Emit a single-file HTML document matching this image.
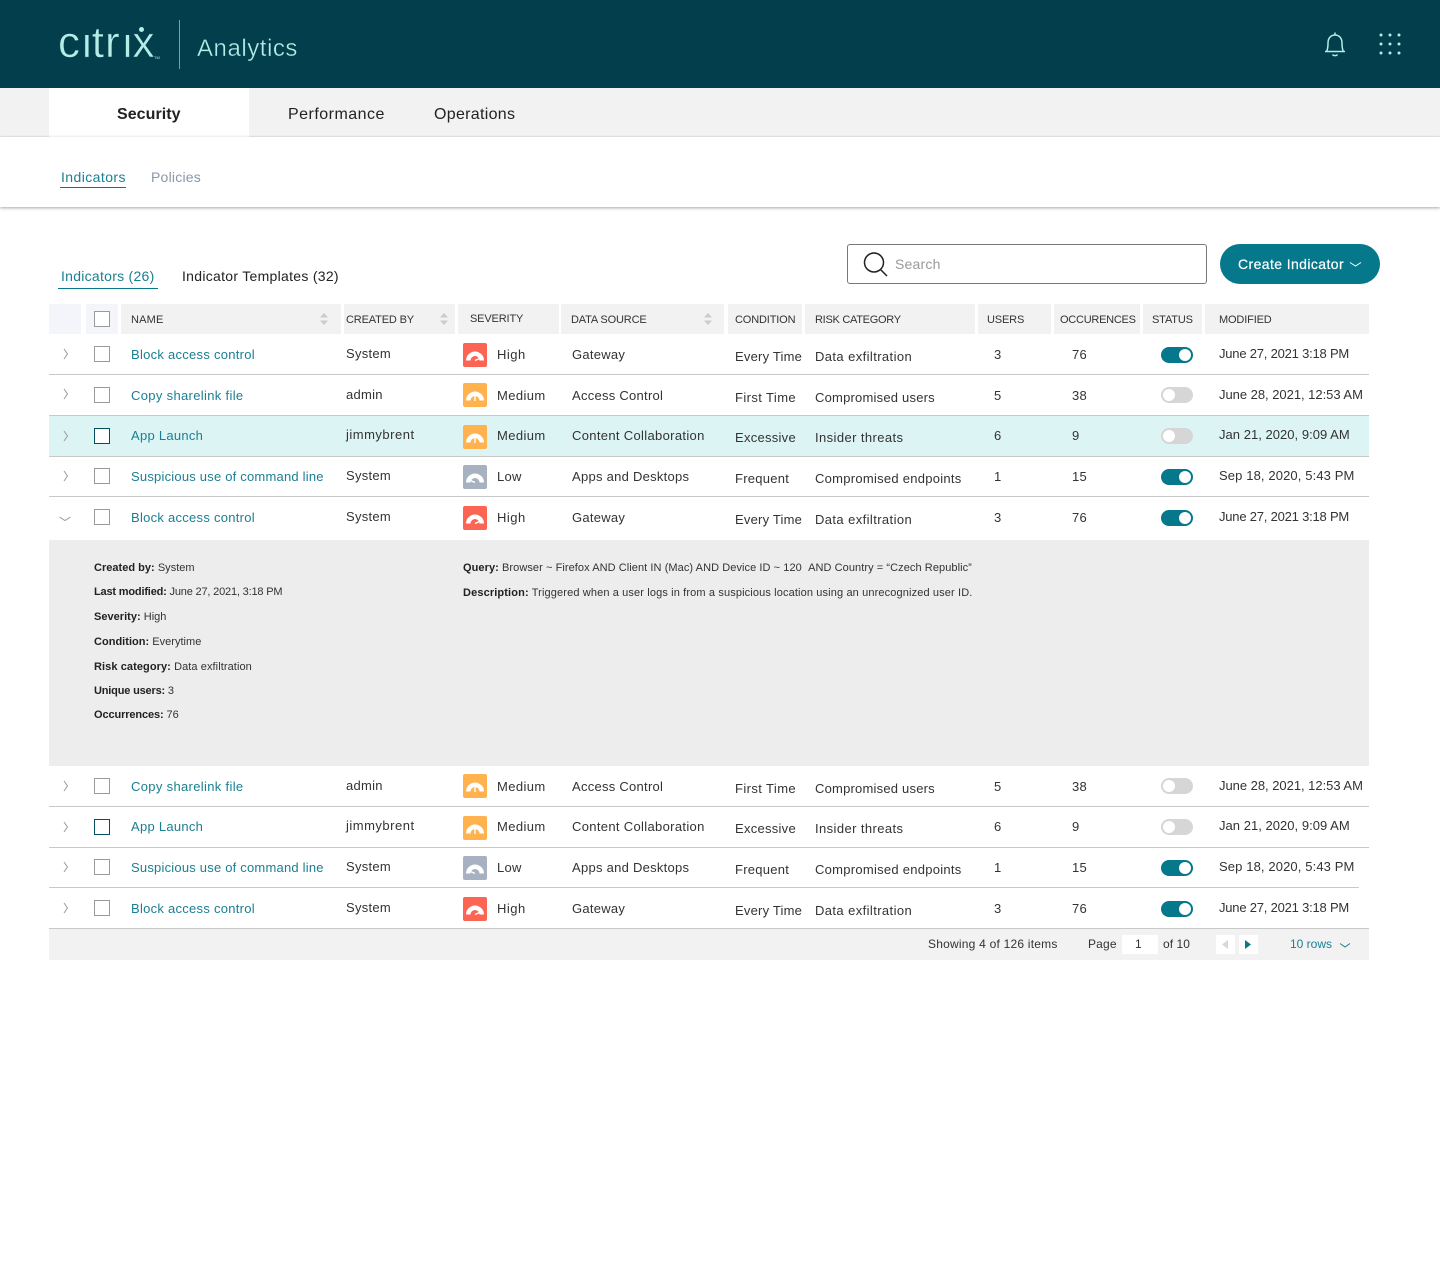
<!DOCTYPE html>
<html lang="en"><head><meta charset="utf-8"><title>Citrix Analytics - Indicators</title>
<style>
*{box-sizing:border-box}
html,body{margin:0;padding:0;background:#fff}
body{position:relative;width:1440px;height:1281px;overflow:hidden;font-family:"Liberation Sans",sans-serif;color:#333;font-size:13px;letter-spacing:.27px}
.a{position:absolute;white-space:nowrap}
.h{position:absolute;top:304px;height:30px;background:#f2f2f2;font-size:11px;line-height:30px;color:#333;letter-spacing:-.15px;white-space:nowrap}
.h span{position:absolute;top:1px}
.r{position:absolute;left:0;width:1440px;height:40px}
.r>span{position:absolute;top:1px;line-height:40px;white-space:nowrap}
.nm{left:131px;color:#1a7f92}
.cb{left:346px;margin-top:-1px}
.sv{left:497px}
.ds{left:572px}
.cn{left:735px;margin-top:2px}
.rk{left:815px;margin-top:2px}
.us{left:994px}
.oc{left:1072px}
.md{left:1219px;margin-top:-1px}
.ls2{letter-spacing:.21px}
.ls3{letter-spacing:.33px}
.ls4{letter-spacing:.4px}
.ls5{letter-spacing:.5px}
.d27{letter-spacing:-.21px}
.d28{letter-spacing:-.03px}
.d21{letter-spacing:.03px}
.d18{letter-spacing:.12px}
.chk{position:absolute;left:94px;top:12px;width:16px;height:16px;border:1px solid #9a9a9a;background:#fff}
.chk.on{border-color:#04505f}
.ic{position:absolute;left:463px;top:9px;width:24px;height:24px;display:block}
.ch{position:absolute;left:60px;top:14px;width:12px;height:12px;display:block}
.tg{position:absolute;left:1161px;top:13px;width:32px;height:16px;border-radius:8px;background:#05788c}
.tg i{position:absolute;left:18px;top:2px;width:12px;height:12px;border-radius:50%;background:#fff}
.tg.off{background:#d6d6d6}
.tg.off i{left:2px}
.ln{position:absolute;left:49px;width:1320px;height:1px;background:#c8c8c8}
.dt{position:absolute;font-size:11px;line-height:14px;color:#333;letter-spacing:.02px;white-space:nowrap}
.dt b{color:#222}
</style></head><body>
<svg width="0" height="0" style="position:absolute"><defs>
<symbol id="hi" viewBox="0 0 24 24"><rect width="24" height="24" rx="2" fill="#fc6453"/><path d="M3 17.500A9 9 0 0 1 21 17.500H16.500A4.500 4.500 0 0 0 7.500 17.500Z" fill="#fff"/><path d="M12 17.500L16.500 15.500" stroke="#fff" stroke-width="1.500"/></symbol>
<symbol id="me" viewBox="0 0 24 24"><rect width="24" height="24" rx="2" fill="#ffb24d"/><path d="M3 17.500A9 9 0 0 1 21 17.500H16.500A4.500 4.500 0 0 0 7.500 17.500Z" fill="#fff"/><path d="M12 13V18" stroke="#fff" stroke-width="1.500"/></symbol>
<symbol id="lo" viewBox="0 0 24 24"><rect width="24" height="24" rx="2" fill="#a8b1c1"/><path d="M3 17.500A9 9 0 0 1 21 17.500H16.500A4.500 4.500 0 0 0 7.500 17.500Z" fill="#fff"/><path d="M12 17.500L7.500 15.500" stroke="#fff" stroke-width="1.500"/></symbol>
<symbol id="cr" viewBox="0 0 12 12"><path d="M4 1L7.500 6L4 11" fill="none" stroke="#999" stroke-width="1"/></symbol>
<symbol id="cd" viewBox="0 0 12 12"><path d="M.5 4L6 7.500L11.500 4" fill="none" stroke="#999" stroke-width="1"/></symbol>
<symbol id="so" viewBox="0 0 8 14"><path d="M4 1L8 5.500H0ZM4 13L0 8.500H8Z" fill="#ccc"/></symbol>
</defs></svg>

<!-- top bar -->
<div class="a" style="left:0;top:0;width:1440px;height:88px;background:#023e4c"></div>
<div class="a" style="left:58px;top:15px;font-size:44px;line-height:56px;color:#b5ece8;letter-spacing:0;-webkit-text-stroke:.5px #023e4c"><span style="letter-spacing:2px">c</span>i<span style="letter-spacing:1px">t</span><span style="letter-spacing:3px">r</span>ix</div>
<div class="a" style="left:83px;top:20px;width:8px;height:15px;background:#023e4c"></div>
<div class="a" style="left:123px;top:20px;width:8px;height:15px;background:#023e4c"></div>
<div class="a" style="left:139px;top:27px;width:5px;height:5px;border-radius:50%;background:#b5ece8"></div>
<div class="a" style="left:154px;top:55px;font-size:4px;line-height:5px;color:#b5ece8;letter-spacing:0">TM</div>
<div class="a" style="left:179px;top:20px;width:1px;height:49px;background:#7d9ea6"></div>
<div class="a" style="left:197px;top:34px;font-size:24px;line-height:30px;color:#b5ece8;letter-spacing:.55px;-webkit-text-stroke:.35px #023e4c">Analytics</div>
<svg class="a" style="left:1322px;top:30px" width="26" height="28" viewBox="0 0 26 28" fill="none" stroke="#b5ece8" stroke-width="1.500"><path d="M13 2.500V5M4.500 21.500C5.800 19.500 6 17.500 6 13C6 8 9 5 13 5S20 8 20 13C20 17.500 20.200 19.500 21.500 21.500ZM3 21.500H23M10.500 24.500C11.500 26 14.500 26 15.500 24.500"/></svg>
<svg class="a" style="left:1376px;top:30px" width="28" height="28" fill="#b5ece8"><circle cx="5" cy="5" r="1.500"/><circle cx="14" cy="5" r="1.500"/><circle cx="23" cy="5" r="1.500"/><circle cx="5" cy="14" r="1.500"/><circle cx="14" cy="14" r="1.500"/><circle cx="23" cy="14" r="1.500"/><circle cx="5" cy="23" r="1.500"/><circle cx="14" cy="23" r="1.500"/><circle cx="23" cy="23" r="1.500"/></svg>

<!-- main tabs -->
<div class="a" style="left:0;top:88px;width:1440px;height:49px;background:#f2f2f2;border-bottom:1px solid #ececec"></div>
<div class="a" style="left:49px;top:88px;width:200px;height:49px;background:#fff"></div>
<div class="a" style="left:117px;top:105px;font-size:16px;line-height:20px;font-weight:bold;color:#222;letter-spacing:.05px">Security</div>
<div class="a" style="left:288px;top:105px;font-size:16px;line-height:20px;color:#222;letter-spacing:.48px">Performance</div>
<div class="a" style="left:434px;top:105px;font-size:16px;line-height:20px;color:#222;letter-spacing:.3px">Operations</div>

<!-- sub nav -->
<div class="a" style="left:0;top:137px;width:1440px;height:70px;background:#fff;box-shadow:0 1px 3px rgba(0,0,0,.35)"></div>
<div class="a" style="left:61px;top:169px;font-size:14px;line-height:17px;color:#1a7f92;letter-spacing:.42px">Indicators</div>
<div class="a" style="left:60px;top:187px;width:66px;height:1px;background:#05788c"></div>
<div class="a" style="left:151px;top:169px;font-size:14px;line-height:17px;color:#8a97a8;letter-spacing:.22px">Policies</div>

<!-- inner tabs -->
<div class="a" style="left:61px;top:268px;font-size:14px;line-height:17px;color:#1a7f92;letter-spacing:.27px">Indicators (26)</div>
<div class="a" style="left:58px;top:288px;width:100px;height:1px;background:#05788c"></div>
<div class="a" style="left:182px;top:268px;font-size:14px;line-height:17px;color:#222;letter-spacing:.29px">Indicator Templates (32)</div>

<!-- search -->
<div class="a" style="left:847px;top:244px;width:360px;height:40px;border:1px solid #777;border-radius:3px;background:#fff"></div>
<svg class="a" style="left:861px;top:251px" width="28" height="26" fill="none" stroke="#222" stroke-width="1.500"><circle cx="13" cy="11.500" r="9.500"/><path d="M19.500 18.500L26 25"/></svg>
<div class="a" style="left:895px;top:256px;font-size:14px;line-height:17px;color:#999;letter-spacing:.2px">Search</div>
<div class="a" style="left:1220px;top:244px;width:160px;height:40px;border-radius:20px;background:#05788c"></div>
<div class="a" style="left:1238px;top:256px;font-size:14px;line-height:17px;color:#fff;font-weight:normal;letter-spacing:.4px;-webkit-text-stroke:.2px #fff">Create Indicator</div>
<svg class="a" style="left:1349px;top:261px" width="13" height="7" fill="none" stroke="#fff"><path d="M1 1.500L6.500 5L12 1.500"/></svg>

<!-- table header -->
<div class="h" style="left:49px;width:32px;background:#f4f5fa"></div>
<div class="h" style="left:86px;width:32px;background:#f4f5fa"></div>
<div class="a" style="left:94px;top:311px;width:16px;height:16px;border:1px solid #9a9a9a;background:#fff"></div>
<div class="h" style="left:121px;width:220px"><span style="left:10px;letter-spacing:.2px">NAME</span></div>
<svg class="a" style="left:320px;top:312px" width="8" height="14"><use href="#so"/></svg>
<div class="h" style="left:344px;width:111px"><span style="left:2px">CREATED BY</span></div>
<svg class="a" style="left:440px;top:312px" width="8" height="14"><use href="#so"/></svg>
<div class="h" style="left:458px;width:101px"><span style="left:12px;top:0">SEVERITY</span></div>
<div class="h" style="left:561px;width:163px"><span style="left:10px">DATA SOURCE</span></div>
<svg class="a" style="left:704px;top:312px" width="8" height="14"><use href="#so"/></svg>
<div class="h" style="left:728px;width:74px"><span style="left:7px">CONDITION</span></div>
<div class="h" style="left:805px;width:170px"><span style="left:10px;letter-spacing:-.28px">RISK CATEGORY</span></div>
<div class="h" style="left:978px;width:73px"><span style="left:9px">USERS</span></div>
<div class="h" style="left:1054px;width:86px"><span style="left:6px;letter-spacing:-.25px">OCCURENCES</span></div>
<div class="h" style="left:1143px;width:59px"><span style="left:9px">STATUS</span></div>
<div class="h" style="left:1205px;width:164px"><span style="left:14px">MODIFIED</span></div>

<!-- backgrounds and rules -->
<div class="a" style="left:49px;top:416px;width:1320px;height:40px;background:#dcf5f4"></div>
<div class="a" style="left:49px;top:540px;width:1320px;height:226px;background:#ededed"></div>
<div class="ln" style="top:374px"></div>
<div class="ln" style="top:415px"></div>
<div class="ln" style="top:456px"></div>
<div class="ln" style="top:496px"></div>
<div class="ln" style="top:806px"></div>
<div class="ln" style="top:847px"></div>
<div class="ln" style="top:887px;width:1310px"></div>

<!-- rows -->
<div class="r" style="top:334px"><svg class="ch"><use href="#cr"/></svg><div class="chk"></div><span class="nm">Block access control</span><span class="cb">System</span><svg class="ic"><use href="#hi"/></svg><span class="sv ls5">High</span><span class="ds">Gateway</span><span class="cn ls2">Every Time</span><span class="rk ls4">Data exfiltration</span><span class="us">3</span><span class="oc">76</span><div class="tg"><i></i></div><span class="md d27">June 27, 2021 3:18 PM</span></div>
<div class="r" style="top:375px"><svg class="ch" style="top:13px"><use href="#cr"/></svg><div class="chk"></div><span class="nm ls3">Copy sharelink file</span><span class="cb">admin</span><svg class="ic" style="top:8px"><use href="#me"/></svg><span class="sv ls4">Medium</span><span class="ds">Access Control</span><span class="cn ls4">First Time</span><span class="rk ls2">Compromised users</span><span class="us">5</span><span class="oc">38</span><div class="tg off" style="top:12px"><i></i></div><span class="md d28">June 28, 2021, 12:53 AM</span></div>
<div class="r" style="top:415px"><svg class="ch" style="top:15px"><use href="#cr"/></svg><div class="chk on" style="top:13px"></div><span class="nm">App Launch</span><span class="cb ls5">jimmybrent</span><svg class="ic" style="top:10px"><use href="#me"/></svg><span class="sv ls4">Medium</span><span class="ds ls3">Content Collaboration</span><span class="cn">Excessive</span><span class="rk ls4">Insider threats</span><span class="us">6</span><span class="oc">9</span><div class="tg off"><i></i></div><span class="md d21">Jan 21, 2020, 9:09 AM</span></div>
<div class="r" style="top:456px"><svg class="ch"><use href="#cr"/></svg><div class="chk"></div><span class="nm ls2">Suspicious use of command line</span><span class="cb">System</span><svg class="ic"><use href="#lo"/></svg><span class="sv">Low</span><span class="ds">Apps and Desktops</span><span class="cn">Frequent</span><span class="rk">Compromised endpoints</span><span class="us">1</span><span class="oc">15</span><div class="tg"><i></i></div><span class="md d18">Sep 18, 2020, 5:43 PM</span></div>
<div class="r" style="top:497px"><svg class="ch" style="top:16px;left:59px"><use href="#cd"/></svg><div class="chk"></div><span class="nm">Block access control</span><span class="cb">System</span><svg class="ic"><use href="#hi"/></svg><span class="sv ls5">High</span><span class="ds">Gateway</span><span class="cn ls2">Every Time</span><span class="rk ls4">Data exfiltration</span><span class="us">3</span><span class="oc">76</span><div class="tg"><i></i></div><span class="md d27">June 27, 2021 3:18 PM</span></div>

<!-- details -->
<div class="dt" style="left:94px;top:561px"><b>Created by:</b> System</div>
<div class="dt" style="left:94px;top:585px;letter-spacing:-.18px"><b>Last modified:</b> June 27, 2021, 3:18 PM</div>
<div class="dt" style="left:94px;top:610px"><b>Severity:</b> High</div>
<div class="dt" style="left:94px;top:635px"><b>Condition:</b> Everytime</div>
<div class="dt" style="left:94px;top:660px;letter-spacing:.08px"><b>Risk category:</b> Data exfiltration</div>
<div class="dt" style="left:94px;top:684px;letter-spacing:-.18px"><b>Unique users:</b> 3</div>
<div class="dt" style="left:94px;top:708px;letter-spacing:-.11px"><b>Occurrences:</b> 76</div>
<div class="dt" style="left:463px;top:561px;letter-spacing:.07px"><b>Query:</b> Browser ~ Firefox AND Client IN (Mac) AND Device ID ~ 120 &nbsp;AND Country = “Czech Republic”</div>
<div class="dt" style="left:463px;top:586px;letter-spacing:.13px"><b>Description:</b> Triggered when a user logs in from a suspicious location using an unrecognized user ID.</div>

<div class="r" style="top:766px"><svg class="ch"><use href="#cr"/></svg><div class="chk"></div><span class="nm ls3">Copy sharelink file</span><span class="cb">admin</span><svg class="ic" style="top:8px"><use href="#me"/></svg><span class="sv ls4">Medium</span><span class="ds">Access Control</span><span class="cn ls4">First Time</span><span class="rk ls2">Compromised users</span><span class="us">5</span><span class="oc">38</span><div class="tg off" style="top:12px"><i></i></div><span class="md d28">June 28, 2021, 12:53 AM</span></div>
<div class="r" style="top:806px"><svg class="ch" style="top:15px"><use href="#cr"/></svg><div class="chk on" style="top:13px"></div><span class="nm">App Launch</span><span class="cb ls5">jimmybrent</span><svg class="ic" style="top:10px"><use href="#me"/></svg><span class="sv ls4">Medium</span><span class="ds ls3">Content Collaboration</span><span class="cn">Excessive</span><span class="rk ls4">Insider threats</span><span class="us">6</span><span class="oc">9</span><div class="tg off"><i></i></div><span class="md d21">Jan 21, 2020, 9:09 AM</span></div>
<div class="r" style="top:847px"><svg class="ch"><use href="#cr"/></svg><div class="chk"></div><span class="nm ls2">Suspicious use of command line</span><span class="cb">System</span><svg class="ic"><use href="#lo"/></svg><span class="sv">Low</span><span class="ds">Apps and Desktops</span><span class="cn">Frequent</span><span class="rk">Compromised endpoints</span><span class="us">1</span><span class="oc">15</span><div class="tg"><i></i></div><span class="md d18">Sep 18, 2020, 5:43 PM</span></div>
<div class="r" style="top:888px"><svg class="ch"><use href="#cr"/></svg><div class="chk"></div><span class="nm">Block access control</span><span class="cb">System</span><svg class="ic"><use href="#hi"/></svg><span class="sv ls5">High</span><span class="ds">Gateway</span><span class="cn ls2">Every Time</span><span class="rk ls4">Data exfiltration</span><span class="us">3</span><span class="oc">76</span><div class="tg"><i></i></div><span class="md d27">June 27, 2021 3:18 PM</span></div>

<!-- footer -->
<div class="a" style="left:49px;top:928px;width:1320px;height:32px;background:#f2f2f2;border-top:1px solid #c8c8c8"></div>
<div class="a" style="left:928px;top:937px;font-size:12px;line-height:14px;letter-spacing:.22px">Showing 4 of 126 items</div>
<div class="a" style="left:1088px;top:937px;font-size:12px;line-height:14px;letter-spacing:.18px">Page</div>
<div class="a" style="left:1122px;top:935px;width:36px;height:19px;background:#fff"></div>
<div class="a" style="left:1135px;top:937px;font-size:12px;line-height:14px">1</div>
<div class="a" style="left:1163px;top:937px;font-size:12px;line-height:14px;letter-spacing:.05px">of 10</div>
<div class="a" style="left:1216px;top:935px;width:19px;height:19px;background:#fff"></div>
<svg class="a" style="left:1222px;top:940px" width="7" height="9"><path d="M6 0V9L0 4.500Z" fill="#d8d8d8"/></svg>
<div class="a" style="left:1239px;top:935px;width:19px;height:19px;background:#fff"></div>
<svg class="a" style="left:1245px;top:940px" width="7" height="9"><path d="M0 0V9L6 4.500Z" fill="#05788c"/></svg>
<div class="a" style="left:1290px;top:937px;font-size:12px;line-height:14px;color:#1a7f92;letter-spacing:0">10 rows</div>
<svg class="a" style="left:1339px;top:942px" width="12" height="7" fill="none" stroke="#1a7f92"><path d="M1 1.500L6 5L11 1.500"/></svg>
</body></html>
